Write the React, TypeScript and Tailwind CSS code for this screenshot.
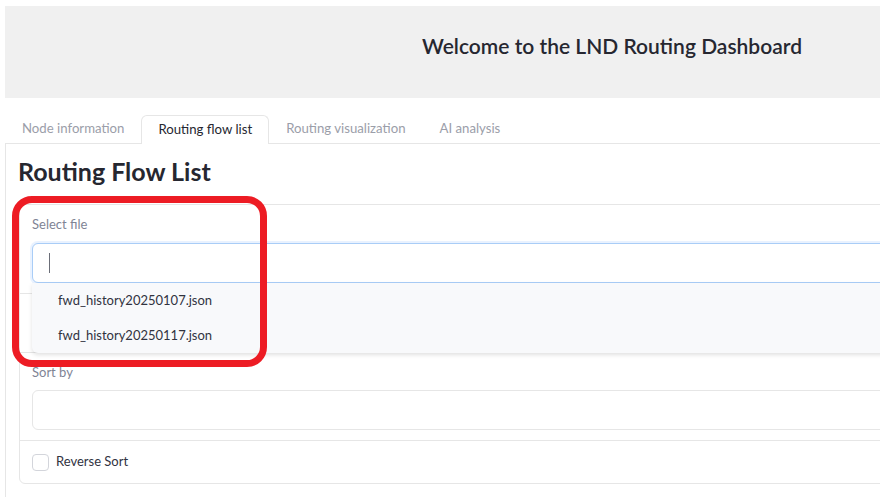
import React from 'react';

const tabs = ['Node information', 'Routing flow list', 'Routing visualization', 'AI analysis'];
const files = ['fwd_history20250107.json', 'fwd_history20250117.json'];

const Checkbox: React.FC = () => (
  <span className="block h-[17px] w-[17px] shrink-0 rounded-[4px] border border-[#d3d5db] bg-white" />
);

export default function App() {
  return (
    <div className="relative h-[497px] w-[880px] overflow-hidden bg-white text-[#31333f]" style={{ fontFamily: 'Lato, "Noto Sans", sans-serif' }}>
      <div className="w-[1219px] pl-[5px] pt-[6px]">
        {/* header */}
        <div className="flex h-[92px] items-center justify-center bg-[#f0f0f0] pb-[12px]">
          <h1 className="text-[21px] font-semibold text-[#262730]">Welcome to the LND Routing Dashboard</h1>
        </div>

        {/* tabs */}
        <div className="mt-[17px] flex h-[28px] items-end">
          {tabs.map((t, i) => (
            <div
              key={t}
              className={
                i === 1
                  ? 'relative z-10 -mb-px flex h-[29px] items-center rounded-t-[6px] border border-b-0 border-[#e6e6e6] bg-white px-[16px] text-[13.2px] text-[#262730]'
                  : 'flex h-[28px] items-center px-[17px] text-[13.2px] text-[#9b9ea9]'
              }
            >
              {t}
            </div>
          ))}
        </div>

        {/* panel */}
        <div className="h-[400px] border-l border-t border-[#e6e6e6] pl-[13px]">
          <h2 className="-ml-[1px] mt-[11px] text-[25px] font-bold leading-[32px] text-[#262730]">Routing Flow List</h2>

          <div className="mt-[17px] rounded-[6px] border border-[#e6e6e6]">
            {/* select file */}
            <div className="border-b border-[#e6e6e6] px-[12px] pb-[10px] pt-[9px]">
              <div className="h-[20px] text-[13px] leading-[20px] text-[#808495]">Select file</div>
              <div className="relative mt-[9px]">
                <div className="flex h-[40px] items-center rounded-[6px] border border-[#a9cdf7] bg-white pl-[16px] shadow-[0_0_0_2px_rgba(191,219,254,0.35)]">
                  <span className="h-[20px] w-px bg-[#6b6e78]" />
                </div>
                <ul className="absolute left-0 right-0 top-full z-20 rounded-b-[6px] bg-[#f8f9fb] text-[13px] text-[#31333f] shadow-[0_2px_4px_rgba(0,0,0,0.12)]">
                  {files.map((f) => (
                    <li key={f} className="flex h-[35px] items-center pl-[26px]">
                      {f}
                    </li>
                  ))}
                </ul>
              </div>
            </div>

            {/* hidden behind the list */}
            <div className="flex h-[59px] items-start border-b border-[#e6e6e6] px-[12px] pt-[12px]">
              <Checkbox />
            </div>

            {/* sort by */}
            <div className="border-b border-[#e6e6e6] px-[12px] pb-[10px] pt-[9px]">
              <div className="h-[20px] text-[13px] leading-[20px] text-[#808495]">Sort by</div>
              <div className="mt-[8px] h-[40px] rounded-[6px] border border-[#e6e6e6] bg-white" />
            </div>

            {/* reverse sort */}
            <div className="flex h-[42px] items-center gap-[7px] px-[12px]">
              <Checkbox />
              <span className="text-[13px] text-[#31333f]">Reverse Sort</span>
            </div>
          </div>
        </div>
      </div>

      {/* red annotation */}
      <div className="pointer-events-none absolute left-[12px] top-[196px] z-30 h-[171px] w-[255px] rounded-[20px] border-[7px] border-[#ed1c24]" />
    </div>
  );
}
